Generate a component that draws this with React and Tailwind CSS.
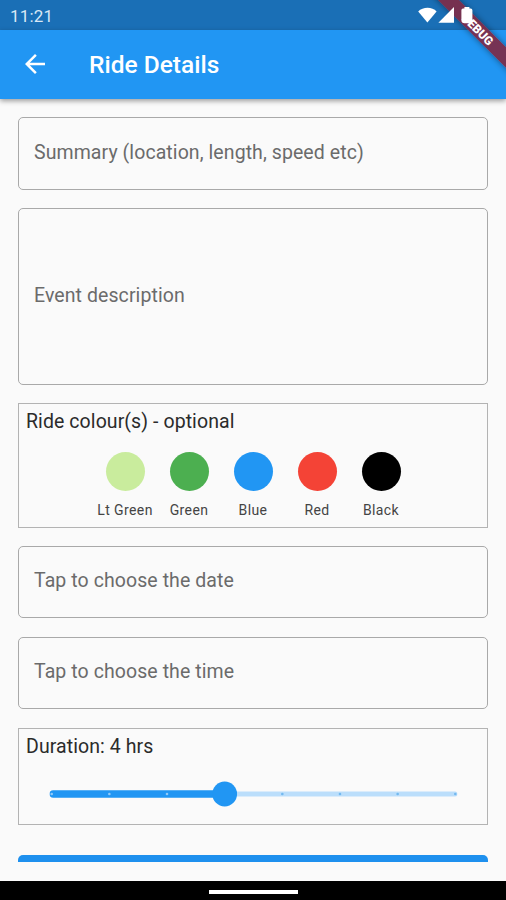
import React, { useState } from "react";
import { MdArrowBack } from "react-icons/md";

const rideColours = [
  { name: "Lt Green", swatch: "bg-[#c9ec9d]" },
  { name: "Green", swatch: "bg-[#4caf50]" },
  { name: "Blue", swatch: "bg-[#2196f3]" },
  { name: "Red", swatch: "bg-[#f44336]" },
  { name: "Black", swatch: "bg-black" },
];

const StatusBar = () => (
  <div className="flex h-[30px] items-center justify-between bg-[#1a6fb6] pt-[2px] pl-[10px] pr-[32px] text-white">
    <span className="text-[17px] leading-[20px] tracking-[0.2px] text-[#d9e8f5]">11:21</span>
    {/* wifi, signal and battery, kept above the debug ribbon */}
    <svg width="56" height="20" viewBox="0 0 56 20" fill="currentColor" className="relative z-20">
      <path d="M0.2 5.6C5 0.6 14.2 0.6 18.6 5.6L9.4 16.6Z" />
      <path d="M20.4 16.8L36 1V16.8Z" />
      <path d="M46.4 2.4V1h5v1.4h1.4q1.6 0 1.6 1.8V14q0 3.2-3.2 3.2h-4.6q-3.2 0-3.2-3.2V4.2q0-1.8 1.6-1.8Z" />
    </svg>
  </div>
);

const AppBar = () => (
  <header className="relative flex h-[69px] items-center bg-[#2196f3] pl-[20px] text-white shadow-[0_2px_5px_rgba(0,0,0,0.38)]">
    <MdArrowBack className="mb-[1px] size-[30px]" />
    <h1 className="ml-[39px] text-[24.5px] leading-[30px] font-medium">Ride Details</h1>
  </header>
);

const Field = ({ label, className }) => (
  <div
    className={`flex items-center rounded-[5px] border border-[#a9a9a9] px-[15px] pb-[2px] text-[19.5px] tracking-[0.08px] text-[#6b6b6b] ${className}`}>
    {label}
  </div>
);

const DurationSlider = ({ value, max }) => {
  const step = 403.6 / (max - 1);
  const thumbX = 2.2 + (value - 1) * step;

  return (
    <svg width="408" height="26" viewBox="0 0 408 26" className="mx-auto block translate-x-[0.5px]">
      <rect x="0" y="10.5" width="408" height="5" rx="2.5" fill="#bbdefb" />
      <rect x="0" y="9.3" width={thumbX} height="7.4" rx="3.7" fill="#2196f3" />
      {Array.from({ length: max }, (_, i) => (
        <circle
          key={i}
          cx={2.2 + i * step}
          cy="13"
          r="1.3"
          fill={i < value ? "#90caf9" : "#74b9ef"}
        />
      ))}
      <circle cx={thumbX} cy="13" r="12.4" fill="#2196f3" />
    </svg>
  );
};

const App = () => {
  const [duration] = useState(4);

  return (
    <div className="relative flex h-[900px] w-[506px] flex-col overflow-hidden bg-[#fafafa] font-['Roboto',sans-serif]">
      <StatusBar />
      <AppBar />

      <main className="flex flex-1 flex-col overflow-hidden px-[18px] pt-[18px]">
        <Field label="Summary (location, length, speed etc)" className="h-[73px]" />
        <Field label="Event description" className="mt-[18px] h-[177px]" />

        <section className="mt-[18px] h-[125px] border border-[#b3b3b3] px-[7px] pt-[6px]">
          <h2 className="text-[19.5px] leading-[24px] tracking-[0.08px] text-[#2b2b2b]">
            Ride colour(s) - optional
          </h2>
          <div className="mt-[18px] flex justify-center">
            {rideColours.map((colour) => (
              <div key={colour.name} className="flex w-[64px] flex-col items-center">
                <div className={`h-[39px] w-[39px] rounded-full ${colour.swatch}`} />
                <span className="mt-[10px] text-[14px] leading-[18px] tracking-[0.4px] whitespace-nowrap text-[#444]">
                  {colour.name}
                </span>
              </div>
            ))}
          </div>
        </section>

        <Field label="Tap to choose the date" className="mt-[18px] h-[72px]" />
        <Field label="Tap to choose the time" className="mt-[19px] h-[72px]" />

        <section className="mt-[19px] h-[97px] border border-[#b3b3b3] px-[7px] pt-[6px]">
          <h2 className="text-[19.5px] leading-[24px] tracking-[0.08px] text-[#2b2b2b]">
            Duration: {duration} hrs
          </h2>
          <div className="mt-[22px]">
            <DurationSlider value={duration} max={8} />
          </div>
        </section>

        {/* top of the submit button, the rest is scrolled off */}
        <div className="mt-[30px] h-[7px] shrink-0 rounded-t-[5px] bg-[#1e90ee]" />
      </main>

      <footer className="flex h-[19px] items-center justify-center bg-black pt-[2px]">
        <div className="h-[4px] w-[89px] bg-white" />
      </footer>

      {/* debug ribbon */}
      <div className="absolute top-[22px] left-[418px] z-10 flex h-[15px] w-[120px] rotate-45 items-center justify-center bg-[#7b2d4b]/95 text-[12px] leading-none font-black text-white shadow-[0_0_6px_rgba(0,0,0,0.45)]">
        DEBUG
      </div>
    </div>
  );
};

export default App;
